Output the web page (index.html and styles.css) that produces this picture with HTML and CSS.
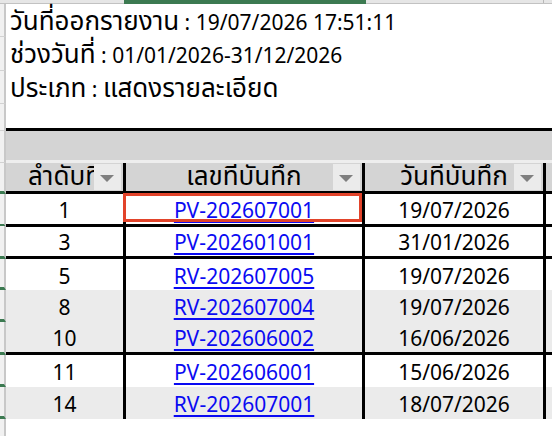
FILE: index.html
```html
<!DOCTYPE html>
<html lang="th">
<head>
<meta charset="utf-8">
<link rel="stylesheet" href="styles.css">
</head>
<body>
<div class="colhdr">
  <div class="ch-a"></div>
  <div class="ch-sel"></div>
  <div class="ch-b"><div class="ch-tick"></div></div>
</div>
<div class="sheet">
  <div class="row title h33"><div class="rh"></div><div class="t"><span><span class="th">วันที่ออกรายงาน</span> : 19/07/2026 17:51:11</span></div></div>
  <div class="row title h34"><div class="rh"></div><div class="t"><span><span class="th">ช่วงวันที่</span> : 01/01/2026-31/12/2026</span></div></div>
  <div class="row title h33"><div class="rh"></div><div class="t"><span><span class="th">ประเภท</span> : <span class="th">แสดงรายละเอียด</span></span></div></div>
  <div class="row title h27"><div class="rh"></div><div class="t blk"></div></div>
  <div class="row title band"><div class="rh"></div><div class="t"></div></div>

  <div class="row thead bb"><div class="rh g"></div>
    <div class="c th">ลำดับที่<span class="flt"></span></div>
    <div class="c th">เลขที่บันทึก<span class="flt"></span></div>
    <div class="c th">วันที่บันทึก<span class="flt"></span></div>
    <div class="c"></div>
  </div>

  <div class="row bb h32"><div class="rh g"></div>
    <div class="c">1</div>
    <div class="c sel"><a href="#">PV-202607001</a><span class="selbox"></span></div>
    <div class="c">19/07/2026</div><div class="c"></div>
  </div>
  <div class="row bb h33"><div class="rh g"></div>
    <div class="c">3</div><div class="c"><a href="#">PV-202601001</a></div>
    <div class="c">31/01/2026</div><div class="c"></div>
  </div>
  <div class="row h31"><div class="rh g"></div>
    <div class="c">5</div><div class="c"><a href="#">RV-202607005</a></div>
    <div class="c">19/07/2026</div><div class="c"></div>
  </div>
  <div class="row h32 alt"><div class="rh g"></div>
    <div class="c">8</div><div class="c"><a href="#">RV-202607004</a></div>
    <div class="c">19/07/2026</div><div class="c"></div>
  </div>
  <div class="row bb h33 alt"><div class="rh g"></div>
    <div class="c">10</div><div class="c"><a href="#">PV-202606002</a></div>
    <div class="c">16/06/2026</div><div class="c"></div>
  </div>
  <div class="row h32"><div class="rh g"></div>
    <div class="c">11</div><div class="c"><a href="#">PV-202606001</a></div>
    <div class="c">15/06/2026</div><div class="c"></div>
  </div>
  <div class="row h32 alt"><div class="rh g"></div>
    <div class="c">14</div><div class="c"><a href="#">RV-202607001</a></div>
    <div class="c">18/07/2026</div><div class="c"></div>
  </div>
  <div class="row title rest"><div class="rh"></div><div class="t"></div></div>
</div>
</body>
</html>
```
FILE: styles.css
```css
* { box-sizing: border-box; }
html, body { margin: 0; padding: 0; }
body {
  width: 552px;
  height: 436px;
  overflow: hidden;
  background: #fff;
  color: #000;
  font-family: "Noto Sans", "Noto Sans Thai", sans-serif;
  font-size: 21px;
}
.th { font-size: 26px; }
.colhdr { display: flex; height: 4px; }
.ch-a { width: 124px; background: #e6e6e6; border-bottom: 1px solid #c2c2c2; }
.ch-sel { width: 242px; background: #3c7a51; }
.ch-b { flex: 1; background: #e6e6e6; border-bottom: 1px solid #c2c2c2; }
.ch-tick { width: 178px; height: 100%; border-right: 1px solid #b8b8b8; }

.sheet { display: flex; flex-direction: column; }
.row {
  display: grid;
  grid-template-columns: 6px 120px 239px 181px 1fr;
}
.row.title { grid-template-columns: 6px 1fr; }
.h34 { height: 34px; }
.h33 { height: 33px; }
.h32 { height: 32px; }
.h31 { height: 31px; }
.h27 { height: 27px; }
.band { height: 32px; }
.rest { height: 17px; }

.rh {
  background: #f1f1f1;
  border-right: 2px solid #c8c8c8;
  border-bottom: 1px solid #d2d2d2;
}
.rh.g { border-bottom: 3px solid #3c7a51; }
.rest .rh { border-bottom: none; }

.t {
  display: flex;
  align-items: center;
  padding-left: 4px;
  white-space: nowrap;
  line-height: 30px;
}
.t.blk { border-bottom: 3px solid #000; }
.band .t { background: #d4d4d4; border-bottom: 3px solid #eeeeee; }

.c {
  position: relative;
  display: flex;
  align-items: center;
  justify-content: center;
  white-space: nowrap;
  overflow: hidden;
  padding-top: 2px;
  border-right: 3px solid #000;
}
.c:last-child { border-right: none; }
.bb > .c { border-bottom: 3px solid #000; }
.alt > .c { background: #ebebeb; }
.thead { height: 31px; }
.thead > .c { background: #d4d4d4; padding-top: 0; }

.flt {
  position: absolute;
  right: 2px;
  top: 1px;
  bottom: 1px;
  width: 27px;
  background: #ebebeb;
}
.flt::after {
  content: "";
  position: absolute;
  left: 6px;
  top: 11px;
  border-left: 7px solid transparent;
  border-right: 7px solid transparent;
  border-top: 7px solid #7f7f7f;
}

a { color: #0a0af2; text-decoration: underline; text-underline-offset: 3px; }
.c.sel { overflow: visible; }
.selbox {
  position: absolute;
  left: -3px;
  right: 0;
  top: -1px;
  bottom: 2px;
  border: 3px solid #e2432a;
}
```
